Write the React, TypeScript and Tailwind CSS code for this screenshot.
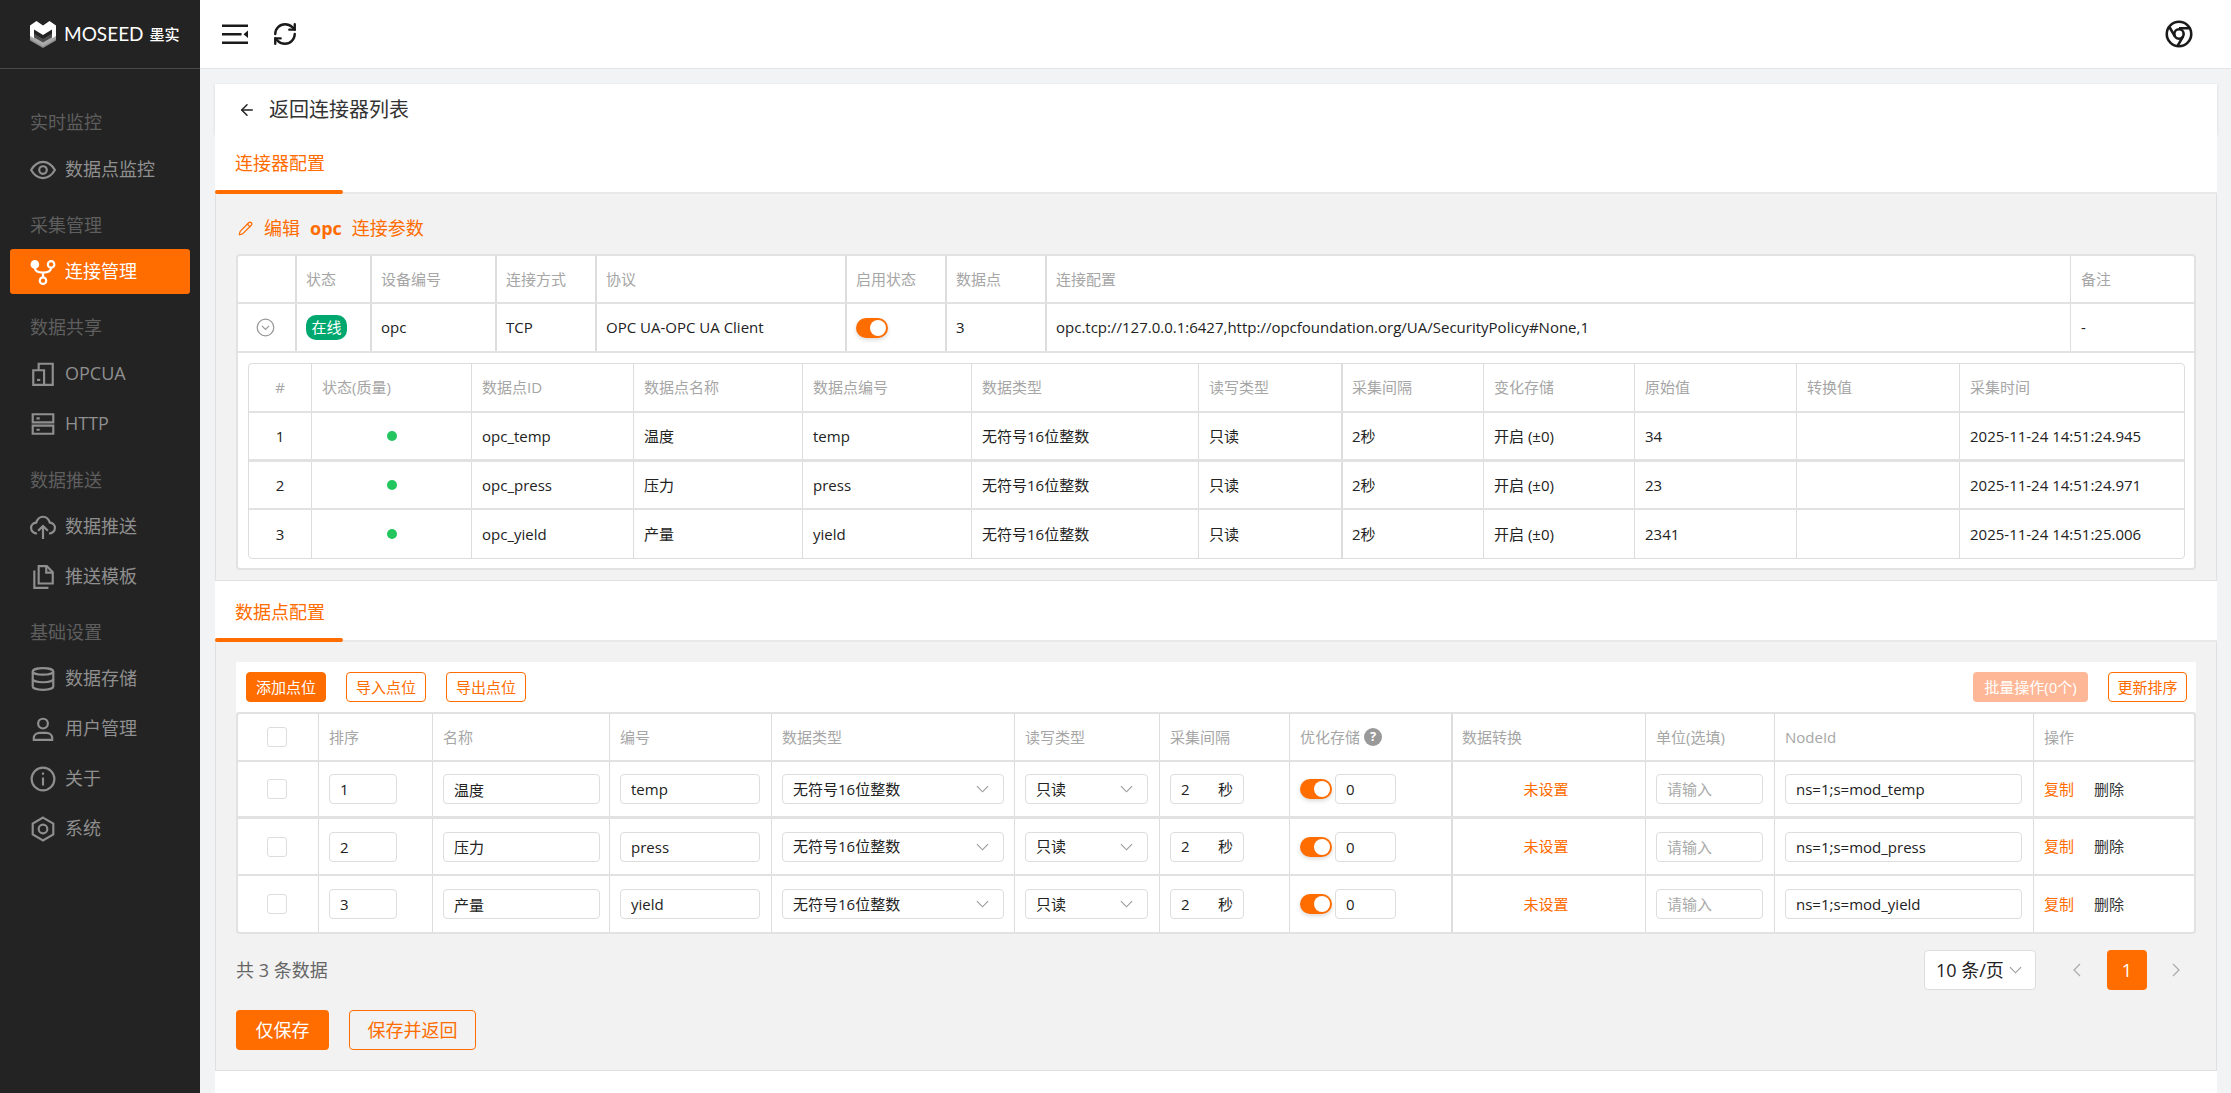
import { ReactNode } from 'react'
import { ArrowLeft, Pencil, RefreshCw } from 'lucide-react'

// column templates for the three tables
const connCols = 'grid grid-cols-[59px_75px_125px_100px_250px_100px_100px_1025px_125px]'
const liveCols = 'grid grid-cols-[62px_160px_162px_169px_169px_227px_143px_142px_151px_162px_163px_225px]'
const pointCols = 'grid grid-cols-[82px_114px_177px_162px_243px_145px_130px_162px_194px_129px_259px_162px]'

const livePoints = [
  { no: 1, id: 'opc_temp', name: '温度', code: 'temp', raw: '34', time: '2025-11-24 14:51:24.945' },
  { no: 2, id: 'opc_press', name: '压力', code: 'press', raw: '23', time: '2025-11-24 14:51:24.971' },
  { no: 3, id: 'opc_yield', name: '产量', code: 'yield', raw: '2341', time: '2025-11-24 14:51:25.006' },
]

const points = [
  { no: 1, name: '温度', code: 'temp', nodeId: 'ns=1;s=mod_temp' },
  { no: 2, name: '压力', code: 'press', nodeId: 'ns=1;s=mod_press' },
  { no: 3, name: '产量', code: 'yield', nodeId: 'ns=1;s=mod_yield' },
]

function Ico({ children, className = 'w-[26px] h-[26px]' }: { children: ReactNode; className?: string }) {
  return (
    <svg viewBox="0 0 24 24" fill="none" stroke="currentColor" strokeWidth="2" className={className}>
      {children}
    </svg>
  )
}

const icons = {
  eye: (
    <Ico>
      <path d="M1 12c3-5 6.500-7.500 11-7.500S20 7 23 12c-3 5-6.500 7.500-11 7.500S4 17 1 12Z" />
      <circle cx="12" cy="12" r="3.500" />
    </Ico>
  ),
  fork: (
    <Ico>
      <circle cx="4.500" cy="5" r="3" fill="currentColor" />
      <circle cx="19.500" cy="5" r="3" />
      <circle cx="12" cy="20" r="3" />
      <path d="M4.500 8c0 3.500 2.500 4.500 7.500 4.500s7.500-1 7.500-4.500M12 12.500V17" />
    </Ico>
  ),
  building: (
    <Ico>
      <path d="M3 8.500h10V22H3zM8 8V2.500h13V22h-8" />
      <path d="M6.500 16.500h3v2h-3z" fill="currentColor" stroke="none" />
    </Ico>
  ),
  server: (
    <Ico>
      <path d="M2.500 3h19v7.500h-19zM2.500 13.500h19V21h-19z" />
      <path d="M6 6.800h3M6 17.300h3" />
    </Ico>
  ),
  cloud: (
    <Ico>
      <path d="M6.500 18C3.500 18 1 15.800 1 13c0-2.700 2-4.800 4.700-5C6.800 4.500 9.100 2.500 12 2.500s5.200 2 6.300 5.500c2.700.2 4.700 2.300 4.700 5 0 2.800-2.500 5-5.500 5" />
      <path d="M12 23V11M7.500 15.500 12 11l4.500 4.500" />
    </Ico>
  ),
  files: (
    <Ico>
      <path d="M8 2h7.500L21 7.500V18H8z" />
      <path d="M15 2.500V8h5.500" />
      <path d="M4 6v16h13" />
    </Ico>
  ),
  database: (
    <Ico>
      <ellipse cx="12" cy="5" rx="9.500" ry="3" />
      <path d="M2.500 5v14c0 1.700 4.300 3 9.500 3s9.500-1.300 9.500-3V5" />
      <path d="M2.500 12c0 1.700 4.300 3 9.500 3s9.500-1.300 9.500-3" />
    </Ico>
  ),
  user: (
    <Ico>
      <circle cx="12" cy="7" r="4.500" />
      <path d="M3.500 22v-1.500c0-3 2.500-5 5.500-5h6c3 0 5.500 2 5.500 5V22z" />
    </Ico>
  ),
  info: (
    <Ico>
      <circle cx="12" cy="12" r="10.500" />
      <path d="M12 10.500V18M12 6v2" />
    </Ico>
  ),
  hexagon: (
    <Ico>
      <path d="M12 1.500 21.500 7v10L12 22.500 2.500 17V7z" />
      <circle cx="12" cy="12" r="4" />
    </Ico>
  ),
}

function Chevron({ className }: { className?: string }) {
  return (
    <svg viewBox="0 0 14 8" fill="none" stroke="currentColor" strokeWidth="1.200" className={`w-[13px] h-[8px] shrink-0 ${className ?? 'text-[#999999]'}`}>
      <path d="m1 1 6 6 6-6" />
    </svg>
  )
}

function NavLabel({ children }: { children: ReactNode }) {
  return <div className="h-[46px] mb-px pl-[30px] flex items-center text-[18px] text-[#5e5e5e]">{children}</div>
}

function NavItem({ icon, label, active }: { icon: ReactNode; label: string; active?: boolean }) {
  return (
    <div
      className={`mx-[10px] h-[45px] mb-[5px] pl-[20px] flex items-center gap-[9px] rounded-[3px] text-[18px] ${
        active ? 'bg-[#ff6c00] text-white' : 'text-[#8f8f8f]'
      }`}
    >
      <span className="w-[26px] h-[26px] shrink-0">{icon}</span>
      {label}
    </div>
  )
}

function Sidebar() {
  return (
    <aside className="w-[200px] shrink-0 bg-[#232323] flex flex-col">
      <div className="h-[69px] border-b border-[#4a4a4a] pl-[30px] flex items-center">
        <svg viewBox="0 0 26 27" className="w-[26px] h-[27px] shrink-0">
          <path d="M0 17.500v2L13 27l13-7.500v-2L13 25z" fill="#8c8c8c" />
          <path d="M0 14v4l13 7.500L26 18v-4l-13 7.500z" fill="#a8a8a8" />
          <path d="M0 4.500 6.500 0 13 4.500 19.500 0 26 4.500V15l-4 2.300V8.500L13 14 4 8.500v8.800L0 15z" fill="#ffffff" />
          <path d="M4 12.500 13 18l9-5.500v5L13 22.500 4 17.500z" fill="#c8c8c8" opacity=".25" />
        </svg>
        <span className="ml-[8px] text-[19px] font-normal text-white font-['Lato','Noto_Sans',sans-serif]">MOSEED</span>
        <span className="ml-[6px] text-[15px] font-medium text-white">墨实</span>
      </div>
      <nav className="pt-[30px]">
        <NavLabel>实时监控</NavLabel>
        <div className="pt-px">
          <NavItem icon={icons.eye} label="数据点监控" />
        </div>
        <div className="mt-[10px]">
          <NavLabel>采集管理</NavLabel>
          <NavItem icon={icons.fork} label="连接管理" active />
        </div>
        <div className="mt-[10px]">
          <NavLabel>数据共享</NavLabel>
          <NavItem icon={icons.building} label="OPCUA" />
          <NavItem icon={icons.server} label="HTTP" />
        </div>
        <div className="mt-[11px]">
          <NavLabel>数据推送</NavLabel>
          <NavItem icon={icons.cloud} label="数据推送" />
          <NavItem icon={icons.files} label="推送模板" />
        </div>
        <div className="mt-[10px]">
          <NavLabel>基础设置</NavLabel>
          <NavItem icon={icons.database} label="数据存储" />
          <NavItem icon={icons.user} label="用户管理" />
          <NavItem icon={icons.info} label="关于" />
          <NavItem icon={icons.hexagon} label="系统" />
        </div>
      </nav>
    </aside>
  )
}

function TopBar() {
  return (
    <header className="h-[69px] shrink-0 bg-white border-b border-[#e4e4e4] flex items-center pl-[22px] pr-[38px] text-[#1a1a1a]">
      <svg viewBox="0 0 26 20" className="w-[26px] h-[20px]" fill="currentColor">
        <path d="M0 .500h26V3H0zM0 9h19.500v2.500H0zM0 17.500h26V20H0zM26 6.500v7.500L21.500 10.200z" />
      </svg>
      <RefreshCw className="w-[26px] h-[26px] ml-[24px]" strokeWidth={2.2} />
      <svg viewBox="0 0 24 24" className="w-[28px] h-[28px] ml-auto" fill="none" stroke="currentColor" strokeWidth="2.200">
        <circle cx="12" cy="12" r="10.500" />
        <circle cx="12" cy="12" r="4" />
        <path d="M21.200 7H12M3.900 6.200 8.500 14M10.900 22l4.600-8" />
      </svg>
    </header>
  )
}

function TabHead({ children, tall }: { children: ReactNode; tall?: boolean }) {
  return (
    <div className={`bg-white border-b-2 border-[#e8e8e8] relative pl-[20px] flex items-center text-[18px] text-[#ff6c00] ${tall ? 'h-[61px] pt-[3px]' : 'h-[60px]'}`}>
      {children}
      <span className="absolute left-0 -bottom-[2px] w-[128px] h-[4px] rounded-[2px] bg-[#ff6c00]" />
    </div>
  )
}

function Toggle() {
  return (
    <span className="w-[32px] h-[20px] shrink-0 rounded-full bg-[#ff6c00] flex items-center justify-end pr-[2px] shadow-[0_2px_4px_rgba(0,0,0,0.15)]">
      <span className="w-[16px] h-[16px] rounded-full bg-white" />
    </span>
  )
}

function Head({ children, thick }: { children?: ReactNode; thick?: boolean }) {
  return (
    <div className={`flex items-center pr-[10px] text-[15px] text-[#a6a6a6] border-[#dddddd] first:border-l-0 ${thick ? 'border-l-2 pl-[9px]' : 'border-l pl-[10px]'}`}>
      {children}
    </div>
  )
}

function Cell({ children, thick, center }: { children?: ReactNode; thick?: boolean; center?: boolean }) {
  return (
    <div
      className={`flex items-center pr-[10px] text-[15px] text-[#222222] border-[#dddddd] first:border-l-0 ${thick ? 'border-l-2 pl-[9px]' : 'border-l pl-[10px]'} ${
        center ? 'justify-center' : ''
      }`}
    >
      {children}
    </div>
  )
}

function Field({ value, placeholder, className }: { value?: string; placeholder?: string; className: string }) {
  return (
    <input
      defaultValue={value}
      placeholder={placeholder}
      className={`h-[30px] rounded-[4px] border border-[#dddddd] bg-white px-[10px] text-[15px] text-[#222222] placeholder:text-[#aaaaaa] outline-none ${className}`}
    />
  )
}

function Pick({ value, className }: { value: string; className: string }) {
  return (
    <div className={`h-[30px] rounded-[4px] border border-[#dddddd] bg-white pl-[10px] pr-[14px] flex items-center justify-between text-[15px] text-[#222222] ${className}`}>
      {value}
      <Chevron />
    </div>
  )
}

function ToolButton({ children, solid }: { children: ReactNode; solid?: boolean }) {
  return (
    <button className={`h-[30px] w-[80px] rounded-[4px] border border-[#ff6c00] text-[15px] ${solid ? 'bg-[#ff6c00] text-white' : 'bg-white text-[#ff6c00]'}`}>
      {children}
    </button>
  )
}

function ConnectorTable() {
  return (
    <div className="bg-white border-2 border-[#e2e2e2] rounded-[4px] pb-[9px]">
      <div className={`${connCols} -ml-[2px] h-[48px] border-b-2 border-[#e2e2e2]`}>
        <Head />
        <Head thick>状态</Head>
        <Head thick>设备编号</Head>
        <Head thick>连接方式</Head>
        <Head thick>协议</Head>
        <Head thick>启用状态</Head>
        <Head thick>数据点</Head>
        <Head thick>连接配置</Head>
        <Head>备注</Head>
      </div>
      <div className={`${connCols} -ml-[2px] h-[49px] border-b-2 border-[#e2e2e2]`}>
        <Cell center>
          <svg viewBox="0 0 24 24" className="w-[19px] h-[19px] text-[#999999]" fill="none" stroke="currentColor" strokeWidth="1.600">
            <circle cx="12" cy="12" r="10.500" />
            <path d="m7.500 10 4.500 4.500 4.500-4.500" />
          </svg>
        </Cell>
        <Cell thick>
          <span className="w-[41px] h-[25px] rounded-[10px] bg-[#00a870] text-white flex items-center justify-center">在线</span>
        </Cell>
        <Cell thick>opc</Cell>
        <Cell thick>TCP</Cell>
        <Cell thick>OPC UA-OPC UA Client</Cell>
        <Cell thick>
          <Toggle />
        </Cell>
        <Cell thick>3</Cell>
        <Cell thick>opc.tcp://127.0.0.1:6427,http://opcfoundation.org/UA/SecurityPolicy#None,1</Cell>
        <Cell>-</Cell>
      </div>
      <div className="mt-[10px] ml-[10px] w-[1937px] border border-[#dddddd] rounded-[4px]">
        <div className={`${liveCols} h-[49px] border-b-2 border-[#e2e2e2]`}>
          <Head>
            <span className="w-full text-center">#</span>
          </Head>
          <Head>状态(质量)</Head>
          <Head>数据点ID</Head>
          <Head>数据点名称</Head>
          <Head>数据点编号</Head>
          <Head>数据类型</Head>
          <Head>读写类型</Head>
          <Head thick>采集间隔</Head>
          <Head>变化存储</Head>
          <Head>原始值</Head>
          <Head>转换值</Head>
          <Head>采集时间</Head>
        </div>
        {livePoints.map(p => (
          <div key={p.no} className={`${liveCols} last:border-b-0 border-[#e2e2e2] ${p.no === 1 ? 'h-[49px] border-b-[3px]' : 'h-[48px] border-b-2'}`}>
            <Cell center>{p.no}</Cell>
            <Cell center>
              <span className="w-[10px] h-[10px] rounded-full bg-[#22c55e]" />
            </Cell>
            <Cell>{p.id}</Cell>
            <Cell>{p.name}</Cell>
            <Cell>{p.code}</Cell>
            <Cell>无符号16位整数</Cell>
            <Cell>只读</Cell>
            <Cell thick>2秒</Cell>
            <Cell>开启 (±0)</Cell>
            <Cell>{p.raw}</Cell>
            <Cell />
            <Cell>{p.time}</Cell>
          </div>
        ))}
      </div>
    </div>
  )
}

function PointTable() {
  return (
    <div className="bg-white border-2 border-[#e2e2e2] rounded-[4px]">
      <div className={`${pointCols} -ml-[2px] h-[48px] border-b-2 border-[#e2e2e2]`}>
        <Head>
          <span className="w-[20px] h-[20px] mx-auto rounded-[3px] border border-[#dddddd] bg-white" />
        </Head>
        <Head>排序</Head>
        <Head>名称</Head>
        <Head>编号</Head>
        <Head>数据类型</Head>
        <Head>读写类型</Head>
        <Head>采集间隔</Head>
        <Head>
          优化存储
          <span className="w-[18px] h-[18px] ml-[4px] rounded-full bg-[#999999] text-white text-[13px] font-bold flex items-center justify-center">?</span>
        </Head>
        <Head thick>数据转换</Head>
        <Head>单位(选填)</Head>
        <Head>NodeId</Head>
        <Head>操作</Head>
      </div>
      {points.map(p => (
        <div key={p.no} className={`${pointCols} -ml-[2px] last:border-b-0 border-[#e2e2e2] ${p.no === 1 ? 'h-[57px] border-b-[3px]' : p.no === 2 ? 'h-[57px] border-b-2' : 'h-[56px]'}`}>
          <Cell center>
            <span className="w-[20px] h-[20px] rounded-[3px] border border-[#dddddd] bg-white" />
          </Cell>
          <Cell>
            <Field value={String(p.no)} className="w-[68px]" />
          </Cell>
          <Cell>
            <Field value={p.name} className="w-[157px]" />
          </Cell>
          <Cell>
            <Field value={p.code} className="w-[140px]" />
          </Cell>
          <Cell>
            <Pick value="无符号16位整数" className="w-[222px]" />
          </Cell>
          <Cell>
            <Pick value="只读" className="w-[123px]" />
          </Cell>
          <Cell>
            <div className="w-[74px] h-[30px] rounded-[4px] border border-[#dddddd] bg-white px-[10px] flex items-center justify-between text-[15px]">
              <span>2</span>
              <span>秒</span>
            </div>
          </Cell>
          <Cell>
            <Toggle />
            <Field value="0" className="w-[61px] ml-[3px]" />
          </Cell>
          <Cell thick center>
            <span className="mr-[5px] text-[#ff6c00]">未设置</span>
          </Cell>
          <Cell>
            <Field placeholder="请输入" className="w-[107px]" />
          </Cell>
          <Cell>
            <Field value={p.nodeId} className="w-[237px]" />
          </Cell>
          <Cell>
            <span className="text-[#ff6c00]">复制</span>
            <span className="ml-[20px] text-[#333333]">删除</span>
          </Cell>
        </div>
      ))}
    </div>
  )
}

export default function App() {
  return (
    <div className="flex h-screen overflow-hidden bg-[#f2f3f5] font-['Open_Sans','Noto_Sans_CJK_SC',sans-serif]">
      <Sidebar />
      <div className="flex-1 min-w-0 flex flex-col">
        <TopBar />
        <main className="flex-1 mt-[15px] ml-[15px] mr-[14px] bg-white">
          {/* back link */}
          <div className="h-[50px] pl-[23px] pt-px flex items-center gap-[13px] text-[20px] text-[#333333] shadow-[0_1px_3px_rgba(0,0,0,0.12)] relative">
            <ArrowLeft className="w-[18px] h-[18px] text-[#222222]" strokeWidth={2} />
            返回连接器列表
          </div>

          <TabHead>连接器配置</TabHead>
          <section className="h-[387px] bg-[#f2f2f2] border-x border-b border-[#e0e0e0] px-[20px]">
            <div className="h-[60px] pl-[2px] pt-[8px] flex items-center text-[18px] text-[#ff6c00]">
              <Pencil className="w-[15px] h-[15px] mr-[11px]" strokeWidth={2} />
              编辑
              <span className="mx-[10px] font-bold">opc</span>
              连接参数
            </div>
            <ConnectorTable />
          </section>

          <TabHead tall>数据点配置</TabHead>
          <section className="h-[429px] bg-[#f2f2f2] border-x border-b border-[#e0e0e0] px-[20px] pt-[20px]">
            <div className="h-[50px] bg-white pl-[10px] pr-[9px] flex items-center gap-[20px]">
              <ToolButton solid>添加点位</ToolButton>
              <ToolButton>导入点位</ToolButton>
              <ToolButton>导出点位</ToolButton>
              <button className="ml-auto h-[30px] w-[115px] rounded-[4px] bg-[#ffb897] text-[15px] text-white">批量操作(0个)</button>
              <button className="h-[30px] w-[79px] rounded-[4px] border border-[#ff6c00] bg-white text-[15px] text-[#ff6c00]">更新排序</button>
            </div>
            <PointTable />
            <div className="mt-[16px] h-[40px] flex items-center text-[18px] text-[#666666]">
              共 3 条数据
              <div className="ml-auto w-[112px] h-[40px] rounded-[4px] border border-[#dddddd] bg-white pl-[11px] pr-[13px] flex items-center justify-between text-[#222222]">
                10 条/页
                <Chevron />
              </div>
              <svg viewBox="0 0 8 14" fill="none" stroke="currentColor" strokeWidth="1.200" className="w-[8px] h-[14px] ml-[37px] text-[#aaaaaa]">
                <path d="M7 1 1 7l6 6" />
              </svg>
              <span className="w-[40px] h-[40px] ml-[26px] rounded-[4px] bg-[#ff6c00] text-white flex items-center justify-center">1</span>
              <svg viewBox="0 0 8 14" fill="none" stroke="currentColor" strokeWidth="1.200" className="w-[8px] h-[14px] ml-[25px] mr-[16px] text-[#aaaaaa]">
                <path d="m1 1 6 6-6 6" />
              </svg>
            </div>
            <div className="mt-[20px] flex gap-[20px]">
              <button className="w-[93px] h-[40px] rounded-[4px] bg-[#ff6c00] text-[18px] text-white">仅保存</button>
              <button className="w-[127px] h-[40px] rounded-[4px] border border-[#ff6c00] text-[18px] text-[#ff6c00]">保存并返回</button>
            </div>
          </section>
        </main>
      </div>
    </div>
  )
}
